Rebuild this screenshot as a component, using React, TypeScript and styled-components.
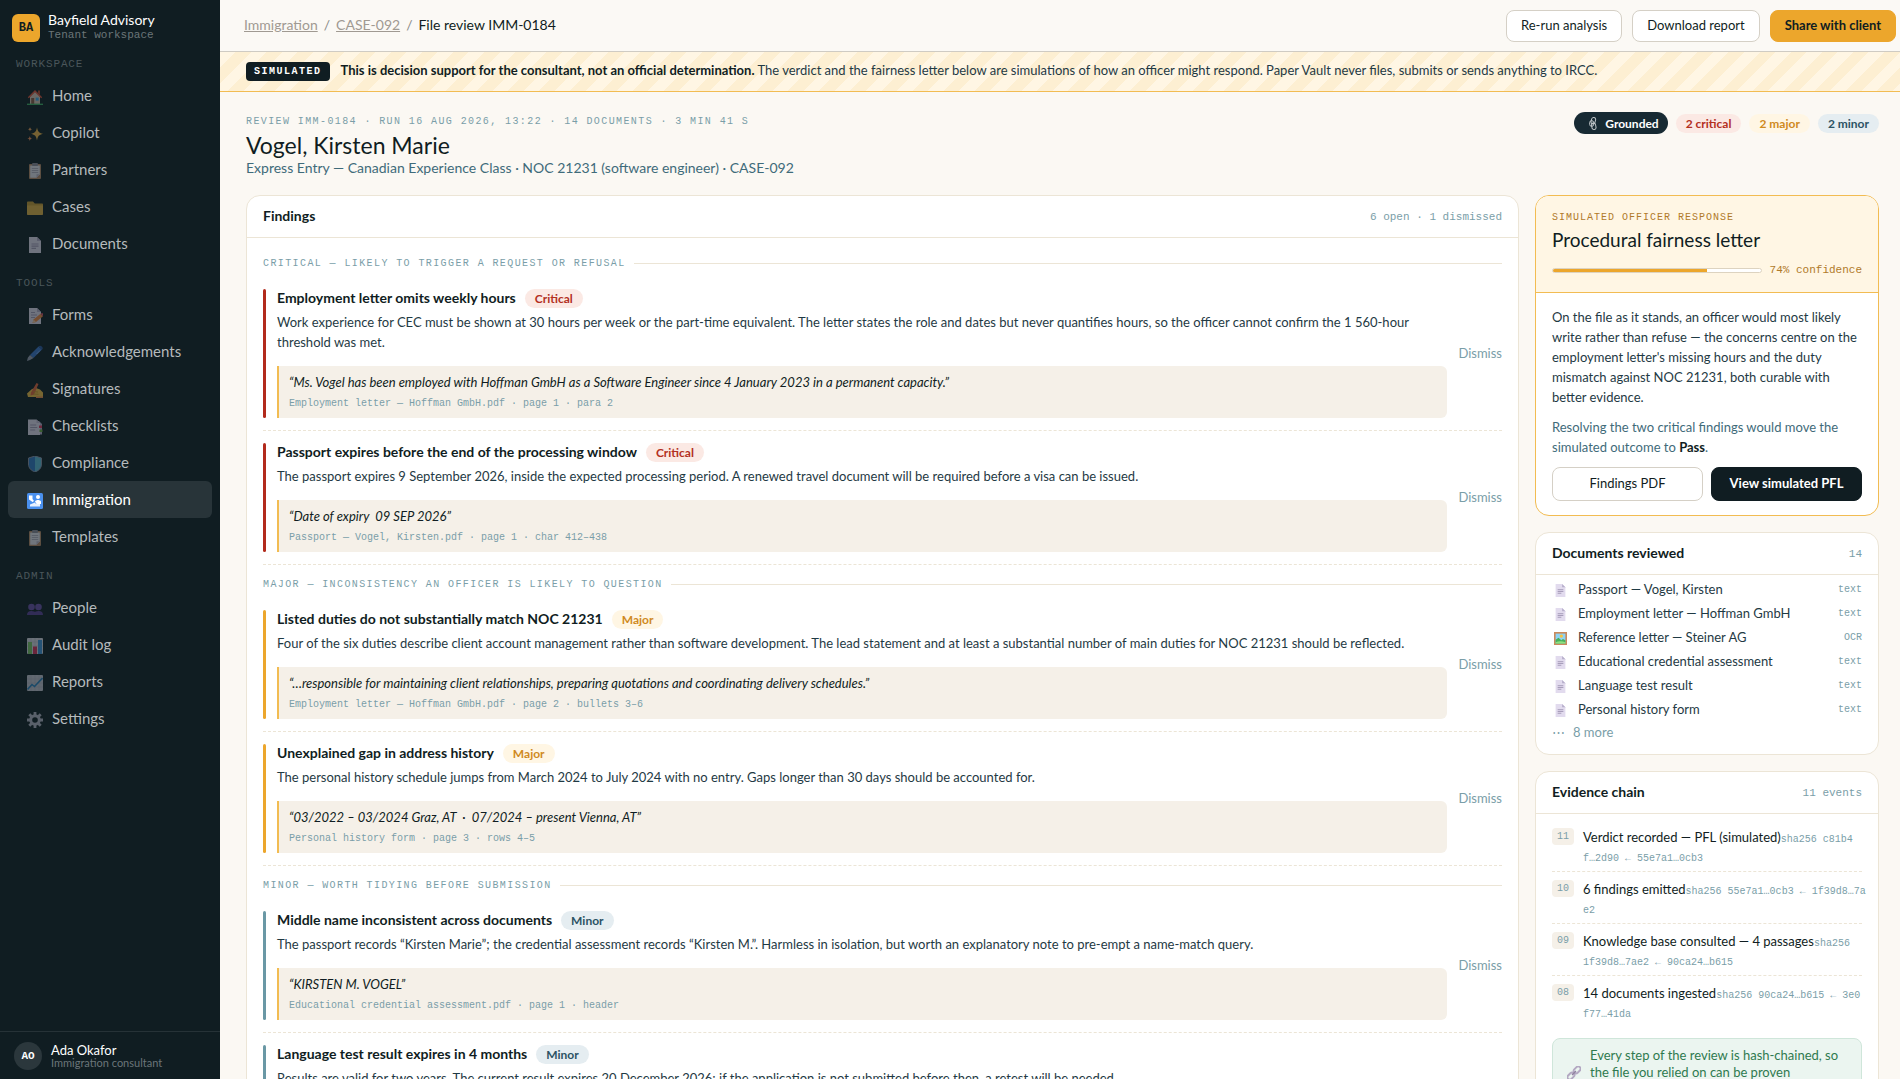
import React from "react";
import styled, { createGlobalStyle, css } from "styled-components";

const sans = `Lato, "Open Sans", sans-serif`;
const mono = `"Liberation Mono", "DejaVu Sans Mono", monospace`;

const c = {
  ink: "#101d22",
  body: "#1f3a44",
  teal: "#3f6b7a",
  muted: "#7a9ea8",
  paper: "#fbf8f3",
  line: "#ece5d6",
  sand: "#f5f0e8",
  amber: "#eca62c",
  amberLine: "#f2bc52",
  cream: "#fff6e4",
};

const tones = {
  critical: { fg: "#b3301f", bg: "#fbe9e4", bar: "#b22a1c" },
  major: { fg: "#d08a1e", bg: "#fff6e4", bar: "#eca62c" },
  minor: { fg: "#2c5364", bg: "#e5edf1", bar: "#6a98a5" },
};
type Tone = keyof typeof tones;

const Global = createGlobalStyle`
  *, *::before, *::after { box-sizing: border-box; }
  body { margin: 0; background: ${c.paper}; color: ${c.ink}; font-family: ${sans}; font-size: 13px; }
  h1, h2, h3, p, ul, ol, blockquote { margin: 0; padding: 0; }
  ul, ol { list-style: none; }
  button { font-family: inherit; cursor: pointer; }
`;

const Shell = styled.div`
  display: grid;
  grid-template-columns: 220px minmax(0, 1fr);
  height: 100vh;
  overflow: hidden;
`;

/* Sidebar */
const Sidebar = styled.aside`
  display: flex;
  flex-direction: column;
  background: ${c.ink};
  color: #fff;
`;
const Brand = styled.div`
  display: flex;
  align-items: center;
  gap: 8px;
  padding: 12px 12px 0;
`;
const Logo = styled.div`
  display: grid;
  place-items: center;
  width: 28px;
  height: 28px;
  border-radius: 6px;
  background: ${c.amber};
  color: ${c.ink};
  font: 700 12px/14px ${mono};
`;
const BrandName = styled.div`
  font-size: 14px;
  line-height: 16px;
`;
const BrandSub = styled.div`
  font: 11px/15px ${mono};
  color: #6b7579;
`;
const NavScroll = styled.nav`
  flex: 1;
  min-height: 0;
  overflow: hidden;
`;
const NavLabel = styled.h2`
  padding: 14px 16px 6px;
  font: 11px/14px ${mono};
  letter-spacing: 0.08em;
  color: #4a565a;
`;
const NavList = styled.ul`
  padding: 0 8px;
`;
const NavLink = styled.a<{ $active?: boolean }>`
  display: flex;
  align-items: center;
  gap: 9px;
  height: 37px;
  padding: 0 19px 1px;
  border-radius: 6px;
  font-size: 15px;
  line-height: 20px;
  text-decoration: none;
  color: ${(p) => (p.$active ? "#fff" : "#b5babc")};
  background: ${(p) => (p.$active ? "#283439" : "transparent")};
  svg {
    margin-top: 4px;
    opacity: ${(p) => (p.$active ? 1 : 0.45)};
  }
`;
const UserBar = styled.div`
  display: flex;
  align-items: center;
  gap: 9px;
  height: 48px;
  padding: 0 14px;
  border-top: 1px solid #263237;
`;
const Avatar = styled.div`
  display: grid;
  place-items: center;
  width: 28px;
  height: 28px;
  border-radius: 50%;
  background: #2b373c;
  font: 700 11px/14px ${mono};
`;
const UserName = styled.div`
  font-size: 13px;
  line-height: 14px;
`;
const UserRole = styled.div`
  font-size: 11px;
  line-height: 12px;
  color: #6b7579;
`;

/* Main column */
const Main = styled.main`
  min-width: 0;
  overflow-y: auto;
  scrollbar-width: none;
`;
const Topbar = styled.header`
  display: flex;
  align-items: center;
  justify-content: space-between;
  height: 52px;
  padding: 0 4px 0 24px;
  border-bottom: 1px solid #cfcbc3;
  background: #fbf9f5;
`;
const Crumbs = styled.nav`
  display: flex;
  gap: 6px;
  padding-bottom: 2px;
  font-size: 14px;
  line-height: 20px;
  color: #8b8b88;
`;
const CrumbLink = styled.a`
  color: #a09a92;
  text-decoration: underline;
`;
const CrumbHere = styled.span`
  color: ${c.ink};
`;
const Actions = styled.div`
  display: flex;
  gap: 10px;
`;
const Button = styled.button<{ $kind?: "primary" | "dark"; $tall?: boolean }>`
  height: ${(p) => (p.$tall ? 34 : 32)}px;
  padding: 0 14px 2px;
  border: 1px solid #d5d0c6;
  border-radius: 8px;
  background: #fff;
  color: ${c.ink};
  font-size: 13px;
  line-height: 16px;
  ${(p) =>
    p.$kind === "primary" &&
    css`
      border-color: ${c.amber};
      background: ${c.amber};
      font-weight: 700;
    `}
  ${(p) =>
    p.$kind === "dark" &&
    css`
      border-color: ${c.ink};
      background: ${c.ink};
      color: #fff;
      font-weight: 700;
    `}
`;
const Banner = styled.div`
  display: flex;
  align-items: center;
  gap: 11px;
  height: 40px;
  padding: 0 26px;
  border-bottom: 1px solid ${c.amberLine};
  background: repeating-linear-gradient(135deg, #fff6e4 0 11px, #fdefd2 11px 22px);
  line-height: 18px;
  color: ${c.body};
`;
const BannerText = styled.p`
  padding-bottom: 4px;
`;
const SimTag = styled.span`
  padding: 3px 8px 2px;
  border-radius: 4px;
  background: ${c.ink};
  color: #fff;
  font: 700 10px/14px ${mono};
  letter-spacing: 0.15em;
`;
const Strong = styled.strong`
  color: ${c.ink};
`;

const Page = styled.div`
  padding: 20px 21px 24px 26px;
`;
const Head = styled.div`
  display: flex;
  align-items: flex-start;
  justify-content: space-between;
  margin-bottom: 18px;
`;
const HeadText = styled.div`
  padding-top: 3px;
`;
const Eyebrow = styled.p<{ $warm?: boolean }>`
  font: 10px/14px ${mono};
  letter-spacing: ${(p) => (p.$warm ? "0.1em" : "0.14em")};
  color: ${(p) => (p.$warm ? "#b07a2a" : c.muted)};
`;
const Title = styled.h1`
  margin-top: 2px;
  font-size: 23px;
  font-weight: 400;
  line-height: 28px;
`;
const Subtitle = styled.p`
  font-size: 14px;
  line-height: 18px;
  color: ${c.teal};
`;
const Pills = styled.div`
  display: flex;
  align-items: center;
  gap: 8px;
`;
const Pill = styled.span<{ $tone: Tone }>`
  padding: 0 10px;
  border-radius: 10px;
  background: ${(p) => tones[p.$tone].bg};
  color: ${(p) => tones[p.$tone].fg};
  font-size: 12px;
  font-weight: 700;
  line-height: 19px;
`;
const Grounded = styled.span`
  display: flex;
  align-items: center;
  gap: 6px;
  height: 22px;
  padding: 0 9px 0 12px;
  border-radius: 11px;
  background: #172a33;
  color: #fff;
  font-size: 12px;
  font-weight: 700;
`;

const Columns = styled.div`
  display: grid;
  grid-template-columns: minmax(0, 1fr) 344px;
  align-items: start;
  gap: 16px;
`;
const Side = styled.div`
  display: grid;
  gap: 16px;
`;
const Card = styled.section<{ $warm?: boolean }>`
  overflow: hidden;
  border: 1px solid ${(p) => (p.$warm ? c.amberLine : c.line)};
  border-radius: 14px;
  background: #fff;
`;
const CardHead = styled.header`
  display: flex;
  align-items: center;
  justify-content: space-between;
  height: 42px;
  padding: 0 16px;
  border-bottom: 1px solid ${c.line};
`;
const CardTitle = styled.h2`
  padding-bottom: 2px;
  font-size: 14px;
  font-weight: 700;
  line-height: 20px;
`;
const Meta = styled.span<{ $warm?: boolean }>`
  font: 11px/16px ${mono};
  color: ${(p) => (p.$warm ? "#b07a2a" : c.muted)};
`;

/* Findings */
const FindingsBody = styled.div`
  padding: 6px 16px;
`;
const GroupLabel = styled.h3`
  display: flex;
  align-items: center;
  gap: 8px;
  padding: 13px 0 7px;
  font: 10px/13px ${mono};
  letter-spacing: 0.14em;
  color: ${c.muted};
  &::after {
    content: "";
    flex: 1;
    height: 1px;
    background: ${c.line};
  }
`;
const FindingRow = styled.article`
  display: flex;
  align-items: center;
  gap: 11px;
  padding: 12px 0;
  border-bottom: 1px dashed ${c.line};
`;
const ToneBar = styled.div<{ $tone: Tone }>`
  align-self: stretch;
  width: 3px;
  border-radius: 2px;
  background: ${(p) => tones[p.$tone].bar};
`;
const FindingMain = styled.div`
  flex: 1;
  min-width: 0;
`;
const FindingHead = styled.div`
  display: flex;
  align-items: center;
  gap: 9px;
  height: 19px;
`;
const FindingTitle = styled.h4`
  margin: 0;
  padding-bottom: 2px;
  font-size: 14px;
  font-weight: 700;
  line-height: 19px;
`;
const FindingText = styled.p`
  margin: 4px 0 14px;
  font-size: 13px;
  line-height: 20px;
  color: ${c.body};
`;
const Quote = styled.blockquote`
  padding: 7px 10px;
  border-left: 2px solid ${c.amberLine};
  border-radius: 0 6px 6px 0;
  background: ${c.sand};
`;
const QuoteText = styled.p`
  font-size: 13px;
  font-style: italic;
  line-height: 19px;
  white-space: pre-wrap;
`;
const QuoteSource = styled.cite`
  display: block;
  margin-top: 5px;
  font: normal 10px/14px ${mono};
  color: ${c.muted};
`;
const Dismiss = styled.button`
  padding: 0 0 2px;
  border: 0;
  background: none;
  font-size: 13px;
  line-height: 18px;
  color: ${c.muted};
`;

/* Officer response */
const VerdictHead = styled.header`
  padding: 15px 16px 14px;
  border-bottom: 1px solid ${c.amberLine};
  background: ${c.cream};
`;
const VerdictTitle = styled.h2`
  margin: 1px 0 9px;
  font-size: 19px;
  font-weight: 400;
  line-height: 27px;
`;
const Confidence = styled.div`
  display: flex;
  align-items: center;
  gap: 8px;
`;
const Track = styled.div`
  flex: 1;
  height: 5px;
  overflow: hidden;
  border: 1px solid #ddd3c0;
  border-radius: 3px;
  background: #fff;
`;
const Fill = styled.div`
  height: 100%;
  background: ${c.amber};
`;
const VerdictBody = styled.div`
  display: grid;
  gap: 10px;
  padding: 14px 16px;
`;
const Copy = styled.p<{ $soft?: boolean }>`
  font-size: 13px;
  line-height: 20px;
  color: ${(p) => (p.$soft ? c.teal : c.body)};
`;
const ButtonPair = styled.div`
  display: grid;
  grid-template-columns: 1fr 1fr;
  gap: 8px;
`;

/* Documents */
const DocList = styled.ul`
  padding: 2px 16px 11px;
`;
const DocRow = styled.li`
  display: flex;
  align-items: center;
  gap: 11px;
  height: 24px;
  padding-left: 2px;
  line-height: 20px;
  color: ${c.body};
  svg {
    margin-top: 3px;
  }
`;
const DocName = styled.span`
  flex: 1;
  padding-bottom: 1px;
`;
const DocKind = styled.span`
  padding-top: 2px;
  font: 10px/14px ${mono};
  color: ${c.muted};
`;
const MoreRow = styled.li`
  display: flex;
  align-items: center;
  gap: 8px;
  height: 22px;
  padding-bottom: 1px;
  line-height: 20px;
  color: ${c.muted};
`;

/* Evidence */
const ChainList = styled.ol`
  padding: 6px 16px 0;
`;
const ChainRow = styled.li`
  display: flex;
  align-items: flex-start;
  gap: 9px;
  padding: 8px 0 5px;
  border-bottom: 1px dashed ${c.line};
  &:last-child {
    border-bottom-color: transparent;
  }
`;
const Step = styled.span`
  width: 22px;
  border-radius: 4px;
  background: ${c.sand};
  font: 10px/17px ${mono};
  text-align: center;
  color: ${c.muted};
`;
const ChainText = styled.p`
  flex: 1;
  min-width: 0;
  font-size: 13px;
  line-height: 19px;
  white-space: nowrap;
`;
const Hash = styled.span`
  font: 10px/12px ${mono};
  color: ${c.muted};
`;
const Note = styled.div`
  display: flex;
  align-items: center;
  gap: 9px;
  margin: 10px 16px 16px;
  padding: 8px 14px;
  border: 1px solid #cfe6da;
  border-radius: 8px;
  background: #ebf5f0;
  font-size: 13px;
  line-height: 17px;
  color: #2f7a4f;
  svg {
    flex: none;
  }
`;

/* Icons, all on a 16 by 16 grid */
const art = {
  home: (
    <>
      <path d="M3 7.5 8 2.5l5 5V15H3z" fill="#d9c3b4" />
      <path d="M11 1.5h2V6l-2-2z" fill="#b4472f" />
      <path d="M0.8 8.2 8 1l7.2 7.2-1 1L8 3.2 1.8 9.2z" fill="#e0543c" />
      <path d="M4.2 9h3v6h-3z" fill="#8a5a44" />
      <path d="M8.7 8.6h3v3h-3z" fill="#3fa9e8" />
      <path d="M0 14.6h16V16H0z" fill="#3fae62" />
    </>
  ),
  sparkles: (
    <>
      <path d="M10 1.5c.8 4 1.8 5.2 6 6.3-4.200 1.100-5.200 2.300-6 6.700-.8-4.400-1.800-5.600-6-6.700 4.200-1.100 5.200-2.300 6-6.300z" fill="#f0b548" />
      <path d="M3 1c.3 1.500.7 2 2.200 2.300C3.700 3.600 3.300 4.100 3 5.600 2.700 4.100 2.300 3.600.8 3.300 2.300 3 2.700 2.500 3 1z" fill="#f0a05a" />
      <path d="M2.800 10c.3 1.700.8 2.200 2.500 2.500-1.700.3-2.200.8-2.500 2.500-.3-1.700-.8-2.200-2.500-2.500 1.700-.3 2.200-.8 2.500-2.500z" fill="#f08f5a" />
    </>
  ),
  clipboard: (
    <>
      <rect x="2" y="1" width="12" height="15" rx="1" fill="#b98a68" />
      <path d="M3.200 2.500h9.600v8.800L9.500 14.800H3.200z" fill="#e4e2ec" />
      <path d="M12.800 11.300H9.500v3.500z" fill="#b9b4c8" />
      <rect x="5" y="0" width="6" height="3" rx="1" fill="#8d8a98" />
      <path d="M4.800 5.500h6.400M4.800 7.500h6.400M4.800 9.500h6.400" stroke="#a7a3b5" strokeWidth="0.800" />
    </>
  ),
  folder: (
    <>
      <path d="M0 2.500C0 2 .4 1.500 1 1.500h5l1.800 2H15c.6 0 1 .4 1 1V14H0z" fill="#c79a33" />
      <path d="M0 5.500h16V14c0 .6-.4 1-1 1H1c-.6 0-1-.4-1-1z" fill="#e3b345" />
    </>
  ),
  page: (
    <>
      <path d="M2 0h8l4 4v12H2z" fill="#e2dbee" />
      <path d="M10 0v4h4z" fill="#b7aecb" />
      <path d="M4.500 7h7M4.500 9.200h7M4.500 11.400h4.500" stroke="#a59bb8" strokeWidth="1.200" />
    </>
  ),
  memo: (
    <>
      <path d="M2 0h8l4 4v12H2z" fill="#e2dbee" />
      <path d="M10 0v4h4z" fill="#b7aecb" />
      <path d="M4 4.500h4M4 7h6M4 9.500h4" stroke="#a59bb8" />
      <path d="M5.500 15 6.500 11.500 13.500 5.800 16 8.300 9 14z" fill="#f08a45" />
      <path d="M13.500 5.800 16 8.300l.2-2.300-1-1z" fill="#e0526a" />
      <path d="M5.500 15 6.500 11.500 9 14z" fill="#f3c9a2" />
    </>
  ),
  pen: (
    <>
      <path d="M3 10 11.500 1.500l3.500 3L6.500 13z" fill="#3b74c9" />
      <path d="M11.500 1.500c1-1 2.500-.8 3.500.2s1 2.200 0 3z" fill="#2b569c" />
      <path d="M3 10l3.500 3L3 15 0 16l.8-3.200z" fill="#9a9fb2" />
      <path d="M13 5.500 9.500 9" stroke="#8db7f2" strokeWidth="0.800" />
    </>
  ),
  hand: (
    <>
      <path d="M1 15 0 11.500 5 7l4-1 4 1.500 3 3V15z" fill="#f2bd45" />
      <path d="M4 10.500 9.500 1l2 1L7 12.500l-3.500 1z" fill="#e2633c" />
      <path d="M6 9.500l5 .500M6 12l5.500.300" stroke="#c98f28" strokeWidth="0.900" />
      <path d="M9 14.500h7V16H9z" fill="#e8874b" />
    </>
  ),
  tabs: (
    <>
      <path d="M4 2h8l3 3v10.500H4z" fill="#b7aecb" />
      <path d="M1 .5h8.500L13 4v12H1z" fill="#e2dbee" />
      <path d="M9.500.5V4H13z" fill="#c3bad4" />
      <path d="M3.200 6h6M3.200 8.500h7M3.200 11h5" stroke="#a59bb8" />
      <path d="M12 6.500h3V9h-3z" fill="#e0385c" />
      <path d="M12.500 10.500H15.500V13h-3z" fill="#6cab45" />
    </>
  ),
  shield: (
    <>
      <path d="M8 0 14.500 2v6c0 4-2.500 6.500-6.500 8-4-1.500-6.500-4-6.500-8V2z" fill="#2f78c4" />
      <path d="M8 0 14.500 2v6c0 4-2.500 6.500-6.500 8z" fill="#5bb8d6" />
      <path d="M8 0 14.500 2v6c0 4-2.500 6.500-6.500 8-4-1.500-6.500-4-6.500-8V2z" fill="none" stroke="#8d93a8" />
    </>
  ),
  passport: (
    <>
      <rect width="16" height="16" rx="1.500" fill="#4a90ee" />
      <circle cx="11" cy="4" r="2" fill="#fff" />
      <path d="M8 8.500c1-2 5-2 6 0V11H9.500z" fill="#fff" />
      <path d="M2 2.500h3.500V6L7 8 5.500 9 2 6.500z" fill="#fff" />
      <path d="M3 11.500 8 9.500l1 1.500h4v2.500H3z" fill="#e8f1ff" />
    </>
  ),
  people: (
    <>
      <circle cx="4.500" cy="6" r="3.300" fill="#6a4fa8" />
      <circle cx="11.500" cy="6" r="3.300" fill="#6a4fa8" />
      <path d="M0 14c0-2.500 1.500-4 4.200-4S8 11 8 11s1-1 3.800-1 4.200 1.500 4.200 4z" fill="#5a3f96" />
    </>
  ),
  bars: (
    <>
      <rect width="16" height="16" rx="1" fill="#dad9e4" />
      <path d="M4 0v16M8 0v16M12 0v16M0 4h16M0 8h16M0 12h16" stroke="#b9b8c8" strokeWidth="0.500" />
      <rect x="1" y="4" width="4" height="12" fill="#7cc465" />
      <rect x="6" y="8.500" width="4" height="7.500" fill="#d8305a" />
      <rect x="11" y="2" width="4" height="14" fill="#3f95dc" />
    </>
  ),
  trend: (
    <>
      <rect width="16" height="16" rx="1" fill="#c3c4d0" />
      <path d="M4 0v16M8 0v16M12 0v16M0 4h16M0 8h16M0 12h16" stroke="#a9aaba" strokeWidth="0.500" />
      <path d="M.5 14.500 5 9.500l2.500 2L15.500 3" fill="none" stroke="#2a80bd" strokeWidth="1.600" />
    </>
  ),
  gear: (
    <>
      <circle cx="8" cy="8" r="4.300" fill="none" stroke="#b3b1c2" strokeWidth="3" />
      <path
        d="M8 0v3M8 13v3M0 8h3M13 8h3M2.300 2.300l2.200 2.200M11.500 11.500l2.200 2.200M2.300 13.700l2.200-2.200M11.500 4.500l2.200-2.200"
        stroke="#b3b1c2"
        strokeWidth="2.800"
      />
    </>
  ),
  picture: (
    <>
      <rect y="0" width="16" height="16" fill="#c98a5c" />
      <rect x="2" y="2" width="12" height="12" fill="#8ed3f4" />
      <circle cx="9" cy="5" r="2" fill="#f9c23c" />
      <path d="M2 9.500 5.500 7 9 10l2-1.500L14 10v4H2z" fill="#46b15c" />
      <path d="M2 12.500c3-1.500 8-1.500 12 0V14H2z" fill="#8fe07f" />
    </>
  ),
  link: (
    <g fill="none" stroke="#b3a8c2" strokeWidth="2.200">
      <rect x="7" y="1.800" width="9" height="5.400" rx="2.700" transform="rotate(-45 11.500 4.500)" />
      <rect x="0" y="8.800" width="9" height="5.400" rx="2.700" transform="rotate(-45 4.500 11.500)" />
      <path d="M5.800 10.200 10.200 5.800" stroke="#8f829f" strokeWidth="1.600" />
    </g>
  ),
  chain: (
    <g fill="none" stroke="#c4cacd" strokeWidth="1.200">
      <rect x="6.500" y="0.600" width="5" height="8" rx="2.500" transform="rotate(14 9 4.500)" />
      <rect x="4.500" y="4.500" width="5" height="7" rx="2.500" />
      <rect x="7" y="7.500" width="5" height="8" rx="2.500" transform="rotate(-10 9 11)" />
    </g>
  ),
};
type IconName = keyof typeof art;

function Icon({ name, size = 16 }: { name: IconName; size?: number }) {
  return (
    <svg width={size} height={size} viewBox="0 0 16 16" aria-hidden="true">
      {art[name]}
    </svg>
  );
}

const nav: { label: string; items: [IconName, string][] }[] = [
  {
    label: "WORKSPACE",
    items: [["home", "Home"], ["sparkles", "Copilot"], ["clipboard", "Partners"], ["folder", "Cases"], ["page", "Documents"]],
  },
  {
    label: "TOOLS",
    items: [
      ["memo", "Forms"],
      ["pen", "Acknowledgements"],
      ["hand", "Signatures"],
      ["tabs", "Checklists"],
      ["shield", "Compliance"],
      ["passport", "Immigration"],
      ["clipboard", "Templates"],
    ],
  },
  { label: "ADMIN", items: [["people", "People"], ["bars", "Audit log"], ["trend", "Reports"], ["gear", "Settings"]] },
];

type Finding = { title: string; text: string; quote: string; source: string };
const groups: { tone: Tone; name: string; label: string; findings: Finding[] }[] = [
  {
    tone: "critical",
    name: "Critical",
    label: "CRITICAL — LIKELY TO TRIGGER A REQUEST OR REFUSAL",
    findings: [
      {
        title: "Employment letter omits weekly hours",
        text: "Work experience for CEC must be shown at 30 hours per week or the part-time equivalent. The letter states the role and dates but never quantifies hours, so the officer cannot confirm the 1 560-hour threshold was met.",
        quote: "“Ms. Vogel has been employed with Hoffman GmbH as a Software Engineer since 4 January 2023 in a permanent capacity.”",
        source: "Employment letter — Hoffman GmbH.pdf · page 1 · para 2",
      },
      {
        title: "Passport expires before the end of the processing window",
        text: "The passport expires 9 September 2026, inside the expected processing period. A renewed travel document will be required before a visa can be issued.",
        quote: "“Date of expiry  09 SEP 2026”",
        source: "Passport — Vogel, Kirsten.pdf · page 1 · char 412–438",
      },
    ],
  },
  {
    tone: "major",
    name: "Major",
    label: "MAJOR — INCONSISTENCY AN OFFICER IS LIKELY TO QUESTION",
    findings: [
      {
        title: "Listed duties do not substantially match NOC 21231",
        text: "Four of the six duties describe client account management rather than software development. The lead statement and at least a substantial number of main duties for NOC 21231 should be reflected.",
        quote: "“…responsible for maintaining client relationships, preparing quotations and coordinating delivery schedules.”",
        source: "Employment letter — Hoffman GmbH.pdf · page 2 · bullets 3–6",
      },
      {
        title: "Unexplained gap in address history",
        text: "The personal history schedule jumps from March 2024 to July 2024 with no entry. Gaps longer than 30 days should be accounted for.",
        quote: "“03/2022 – 03/2024 Graz, AT  ·  07/2024 – present Vienna, AT”",
        source: "Personal history form · page 3 · rows 4–5",
      },
    ],
  },
  {
    tone: "minor",
    name: "Minor",
    label: "MINOR — WORTH TIDYING BEFORE SUBMISSION",
    findings: [
      {
        title: "Middle name inconsistent across documents",
        text: "The passport records “Kirsten Marie”; the credential assessment records “Kirsten M.”. Harmless in isolation, but worth an explanatory note to pre-empt a name-match query.",
        quote: "“KIRSTEN M. VOGEL”",
        source: "Educational credential assessment.pdf · page 1 · header",
      },
      {
        title: "Language test result expires in 4 months",
        text: "Results are valid for two years. The current result expires 20 December 2026; if the application is not submitted before then, a retest will be needed.",
        quote: "“Test date 20 DEC 2024”",
        source: "Language test result.pdf · page 1 · header",
      },
    ],
  },
];

const docs: [IconName, string, string][] = [
  ["page", "Passport — Vogel, Kirsten", "text"],
  ["page", "Employment letter — Hoffman GmbH", "text"],
  ["picture", "Reference letter — Steiner AG", "OCR"],
  ["page", "Educational credential assessment", "text"],
  ["page", "Language test result", "text"],
  ["page", "Personal history form", "text"],
];

const events = [
  ["11", "Verdict recorded — PFL (simulated)", "sha256 c81b4", "f…2d90 ← 55e7a1…0cb3"],
  ["10", "6 findings emitted", "sha256 55e7a1…0cb3 ← 1f39d8…7a", "e2"],
  ["09", "Knowledge base consulted — 4 passages", "sha256", "1f39d8…7ae2 ← 90ca24…b615"],
  ["08", "14 documents ingested", "sha256 90ca24…b615 ← 3e0", "f77…41da"],
];

const confidence = 74;

export default function App() {
  return (
    <>
      <Global />
      <Shell>
        <Sidebar>
          <Brand>
            <Logo>BA</Logo>
            <div>
              <BrandName>Bayfield Advisory</BrandName>
              <BrandSub>Tenant workspace</BrandSub>
            </div>
          </Brand>
          <NavScroll aria-label="Main">
            {nav.map((section) => (
              <div key={section.label}>
                <NavLabel>{section.label}</NavLabel>
                <NavList>
                  {section.items.map(([icon, name]) => {
                    const active = name === "Immigration";
                    return (
                      <li key={name}>
                        <NavLink href="#" $active={active} aria-current={active ? "page" : undefined}>
                          <Icon name={icon} />
                          {name}
                        </NavLink>
                      </li>
                    );
                  })}
                </NavList>
              </div>
            ))}
          </NavScroll>
          <UserBar>
            <Avatar>AO</Avatar>
            <div>
              <UserName>Ada Okafor</UserName>
              <UserRole>Immigration consultant</UserRole>
            </div>
          </UserBar>
        </Sidebar>

        <Main>
          <Topbar>
            <Crumbs aria-label="Breadcrumb">
              <CrumbLink href="#">Immigration</CrumbLink>
              <span>/</span>
              <CrumbLink href="#">CASE-092</CrumbLink>
              <span>/</span>
              <CrumbHere>File review IMM-0184</CrumbHere>
            </Crumbs>
            <Actions>
              <Button type="button">Re-run analysis</Button>
              <Button type="button">Download report</Button>
              <Button type="button" $kind="primary">Share with client</Button>
            </Actions>
          </Topbar>
          <Banner>
            <SimTag>SIMULATED</SimTag>
            <BannerText>
              <Strong>This is decision support for the consultant, not an official determination.</Strong> The verdict and the
              fairness letter below are simulations of how an officer might respond. Paper Vault never files, submits or sends
              anything to IRCC.
            </BannerText>
          </Banner>

          <Page>
            <Head>
              <HeadText>
                <Eyebrow>REVIEW IMM-0184 · RUN 16 AUG 2026, 13:22 · 14 DOCUMENTS · 3 MIN 41 S</Eyebrow>
                <Title>Vogel, Kirsten Marie</Title>
                <Subtitle>Express Entry — Canadian Experience Class · NOC 21231 (software engineer) · CASE-092</Subtitle>
              </HeadText>
              <Pills>
                <Grounded>
                  <Icon name="chain" size={13} />
                  Grounded
                </Grounded>
                <Pill $tone="critical">2 critical</Pill>
                <Pill $tone="major">2 major</Pill>
                <Pill $tone="minor">2 minor</Pill>
              </Pills>
            </Head>

            <Columns>
              <Card>
                <CardHead>
                  <CardTitle>Findings</CardTitle>
                  <Meta>6 open · 1 dismissed</Meta>
                </CardHead>
                <FindingsBody>
                  {groups.map((group) => (
                    <section key={group.tone}>
                      <GroupLabel>{group.label}</GroupLabel>
                      {group.findings.map((f) => (
                        <FindingRow key={f.title}>
                          <ToneBar $tone={group.tone} />
                          <FindingMain>
                            <FindingHead>
                              <FindingTitle>{f.title}</FindingTitle>
                              <Pill $tone={group.tone}>{group.name}</Pill>
                            </FindingHead>
                            <FindingText>{f.text}</FindingText>
                            <Quote>
                              <QuoteText>{f.quote}</QuoteText>
                              <QuoteSource>{f.source}</QuoteSource>
                            </Quote>
                          </FindingMain>
                          <Dismiss type="button">Dismiss</Dismiss>
                        </FindingRow>
                      ))}
                    </section>
                  ))}
                </FindingsBody>
              </Card>

              <Side>
                <Card $warm>
                  <VerdictHead>
                    <Eyebrow $warm>SIMULATED OFFICER RESPONSE</Eyebrow>
                    <VerdictTitle>Procedural fairness letter</VerdictTitle>
                    <Confidence>
                      <Track>
                        <Fill style={{ width: `${confidence}%` }} />
                      </Track>
                      <Meta $warm>{confidence}% confidence</Meta>
                    </Confidence>
                  </VerdictHead>
                  <VerdictBody>
                    <Copy>
                      On the file as it stands, an officer would most likely write rather than refuse — the concerns centre on
                      the employment letter's missing hours and the duty mismatch against NOC 21231, both curable with better
                      evidence.
                    </Copy>
                    <Copy $soft>
                      Resolving the two critical findings would move the simulated outcome to <Strong>Pass</Strong>.
                    </Copy>
                    <ButtonPair>
                      <Button type="button" $tall>Findings PDF</Button>
                      <Button type="button" $tall $kind="dark">View simulated PFL</Button>
                    </ButtonPair>
                  </VerdictBody>
                </Card>

                <Card>
                  <CardHead>
                    <CardTitle>Documents reviewed</CardTitle>
                    <Meta>14</Meta>
                  </CardHead>
                  <DocList>
                    {docs.map(([icon, name, kind]) => (
                      <DocRow key={name}>
                        <Icon name={icon} size={13} />
                        <DocName>{name}</DocName>
                        <DocKind>{kind}</DocKind>
                      </DocRow>
                    ))}
                    <MoreRow>
                      <span aria-hidden="true">⋯</span>
                      <span>8 more</span>
                    </MoreRow>
                  </DocList>
                </Card>

                <Card>
                  <CardHead>
                    <CardTitle>Evidence chain</CardTitle>
                    <Meta>11 events</Meta>
                  </CardHead>
                  <ChainList>
                    {events.map(([step, name, hash, rest]) => (
                      <ChainRow key={step}>
                        <Step>{step}</Step>
                        <ChainText>
                          {name}
                          <Hash>
                            {hash}
                            <br />
                            {rest}
                          </Hash>
                        </ChainText>
                      </ChainRow>
                    ))}
                  </ChainList>
                  <Note>
                    <Icon name="link" size={14} />
                    <p>Every step of the review is hash-chained, so the file you relied on can be proven unchanged later.</p>
                  </Note>
                </Card>
              </Side>
            </Columns>
          </Page>
        </Main>
      </Shell>
    </>
  );
}
